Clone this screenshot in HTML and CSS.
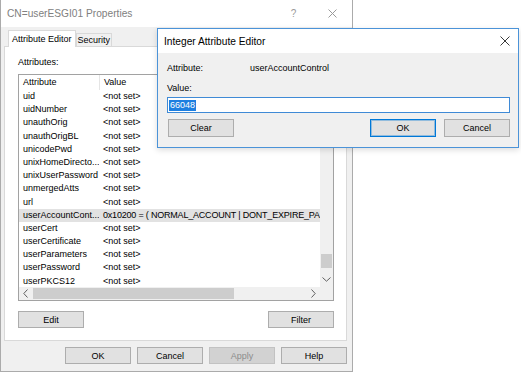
FILE: index.html
```html
<!DOCTYPE html>
<html lang="en">
<head>
    <meta charset="UTF-8">
    <meta name="viewport" content="width=device-width, initial-scale=1.0">
    <title>CN=userESGI01 Properties</title>

    <link rel="stylesheet" href="styles.css">

</head>
<body>

    <div class="desktop">

        <!-- properties window (inactive) -->
        <div class="window props">
            <div class="titlebar">
                <span class="title">CN=userESGI01 Properties</span>
                <span class="ctrl">?</span>
                <span class="ctrl">
                    <svg width="9" height="9" viewBox="0 0 9 9"><path d="M0.5 0.5 L8.5 8.5 M8.5 0.5 L0.5 8.5" stroke="#9a9a9a" stroke-width="1" fill="none"/></svg>
                </span>
            </div>

            <div class="props-body">
                <div class="tabs">
                    <div class="tab active">Attribute Editor</div>
                    <div class="tab">Security</div>
                </div>

                <div class="panel">
                    <div class="label">Attributes:</div>

                    <div class="listview">
                        <div class="lv-main">
                            <div class="lv-header">
                                <span class="col-name">Attribute</span>
                                <span class="col-value">Value</span>
                            </div>
                            <div class="lv-rows">
                                <div class="row"><span>uid</span><span>&lt;not set&gt;</span></div>
                                <div class="row"><span>uidNumber</span><span>&lt;not set&gt;</span></div>
                                <div class="row"><span>unauthOrig</span><span>&lt;not set&gt;</span></div>
                                <div class="row"><span>unauthOrigBL</span><span>&lt;not set&gt;</span></div>
                                <div class="row"><span>unicodePwd</span><span>&lt;not set&gt;</span></div>
                                <div class="row"><span>unixHomeDirecto...</span><span>&lt;not set&gt;</span></div>
                                <div class="row"><span>unixUserPassword</span><span>&lt;not set&gt;</span></div>
                                <div class="row"><span>unmergedAtts</span><span>&lt;not set&gt;</span></div>
                                <div class="row"><span>url</span><span>&lt;not set&gt;</span></div>
                                <div class="row selected"><span>userAccountCont...</span><span class="long">0x10200 = ( NORMAL_ACCOUNT | DONT_EXPIRE_PASSWORD )</span></div>
                                <div class="row"><span>userCert</span><span>&lt;not set&gt;</span></div>
                                <div class="row"><span>userCertificate</span><span>&lt;not set&gt;</span></div>
                                <div class="row"><span>userParameters</span><span>&lt;not set&gt;</span></div>
                                <div class="row"><span>userPassword</span><span>&lt;not set&gt;</span></div>
                                <div class="row"><span>userPKCS12</span><span>&lt;not set&gt;</span></div>
                            </div>
                            <div class="hscroll">
                                <span class="arrow">
                                    <svg width="5" height="9" viewBox="0 0 5 9"><polyline points="4.5,0.5 0.8,4.5 4.5,8.5" stroke="#606060" fill="none"/></svg>
                                </span>
                                <div class="htrack"><div class="hthumb"></div></div>
                                <span class="arrow">
                                    <svg width="5" height="9" viewBox="0 0 5 9"><polyline points="0.5,0.5 4.2,4.5 0.5,8.5" stroke="#606060" fill="none"/></svg>
                                </span>
                            </div>
                        </div>
                        <div class="vscroll">
                            <span class="arrow">
                                <svg width="9" height="5" viewBox="0 0 9 5"><polyline points="0.5,4.5 4.5,0.8 8.5,4.5" stroke="#606060" fill="none"/></svg>
                            </span>
                            <div class="vtrack"><div class="vthumb"></div></div>
                            <span class="arrow">
                                <svg width="9" height="5" viewBox="0 0 9 5"><polyline points="0.5,0.5 4.5,4.2 8.5,0.5" stroke="#606060" fill="none"/></svg>
                            </span>
                            <div class="corner"></div>
                        </div>
                    </div>

                    <div class="panel-buttons">
                        <button class="btn">Edit</button>
                        <button class="btn">Filter</button>
                    </div>
                </div>

                <div class="dialog-buttons">
                    <button class="btn">OK</button>
                    <button class="btn">Cancel</button>
                    <button class="btn disabled">Apply</button>
                    <button class="btn">Help</button>
                </div>
            </div>
        </div>

        <!-- integer editor (active, on top) -->
        <div class="window editor">
            <div class="ed-titlebar">
                <span class="title">Integer Attribute Editor</span>
                <svg width="10" height="10" viewBox="0 0 10 10"><path d="M0.5 0.5 L9.5 9.5 M9.5 0.5 L0.5 9.5" stroke="#222" stroke-width="0.9" fill="none"/></svg>
            </div>
            <div class="ed-body">
                <div class="field">
                    <span>Attribute:</span>
                    <span>userAccountControl</span>
                </div>
                <div class="value-label">Value:</div>
                <div class="textbox"><span class="sel-text">66048</span></div>
                <div class="ed-buttons">
                    <button class="btn clear">Clear</button>
                    <button class="btn default">OK</button>
                    <button class="btn">Cancel</button>
                </div>
            </div>
        </div>

    </div>

</body>
</html>
```

FILE: styles.css
```css
*{
    margin: 0;padding:0;
    box-sizing: border-box
}

body{
    font-family: "Liberation Sans", Arial, sans-serif;
    font-size: 9px;
    color: #000;
    background: #fff
}

.desktop{
    position: relative;
    width: 521px;
    height: 373px;
    overflow: hidden;
    background: #fff
}

.window{
    position: absolute;
    display: flex;
    flex-direction: column;
    background: #f0f0f0
}

/* ---- properties window ---- */

.props{
    left: 0; top: 0;
    width: 353px;
    height: 372px;
    border: 1px solid #ababab;
    border-top: none
}

.titlebar{
    height: 27px;
    background: #fff;
    display: flex;
    align-items: center
}

.titlebar .title{
    flex: 1;
    padding-left: 6px;
    color: #808080;
    font-size: 10.2px
}

.ctrl{
    width: 39px;
    display: flex;
    justify-content: center;
    color: #9a9a9a;
    font-size: 10px
}

.props-body{
    flex: 1;
    display: flex;
    flex-direction: column;
    padding: 3px 5px 7px 3px
}

.tabs{
    display: flex;
    align-items: flex-end;
    height: 16px;
    padding-left: 4px
}

.tab{
    height: 13px;
    line-height: 13px;
    padding: 0 1px;
    border: 1px solid #d9d9d9;
    border-bottom: none;
    background: #f0f0f0
}

.tab.active{
    height: 17px;
    line-height: 16px;
    padding: 0 3px;
    margin-bottom: -1px;
    background: #fff;
    position: relative;
    z-index: 1
}

.panel{
    height: 295px;
    background: #fff;
    border: 1px solid #d9d9d9;
    padding: 9px 12px 12px 13px;
    display: flex;
    flex-direction: column
}

.label{
    line-height: 12px
}

.listview{
    margin-top: 6px;
    height: 227px;
    border: 1px solid #a2a2a2;
    display: flex
}

.lv-main{
    flex: 1;
    min-width: 0;
    display: flex;
    flex-direction: column
}

.lv-header{
    height: 15px;
    line-height: 15px;
    display: grid;
    grid-template-columns: 81px 1fr
}

.lv-header span{
    padding-left: 4px
}

.lv-header .col-name{
    border-right: 1px solid #e5e5e5
}

.lv-rows{
    flex: 1;
    overflow: hidden
}

.row{
    height: 13.2px;
    line-height: 13.2px;
    display: grid;
    grid-template-columns: 80px 1fr;
    white-space: nowrap
}

.row span{
    padding-left: 4px;
    overflow: hidden
}

.row .long{
    letter-spacing: -0.2px
}

.row.selected{
    background: #e2e2e2
}

.arrow{
    width: 13px;
    height: 13px;
    display: flex;
    justify-content: center;
    align-items: center;
    flex-shrink: 0
}

.hscroll{
    height: 13px;
    display: flex;
    background: #f0f0f0
}

.htrack{
    flex: 1;
    display: flex;
    align-items: center
}

.hthumb{
    width: 201px;
    height: 11px;
    margin-left: 1px;
    background: #cdcdcd
}

.vscroll{
    width: 13px;
    display: flex;
    flex-direction: column;
    background: #f0f0f0
}

.vtrack{
    flex: 1;
    display: flex;
    flex-direction: column;
    justify-content: flex-end;
    align-items: center
}

.vthumb{
    width: 11px;
    height: 14px;
    margin-bottom: 5px;
    background: #cdcdcd
}

.corner{
    height: 14px
}

.panel-buttons{
    margin-top: 10px;
    display: flex;
    justify-content: space-between
}

.btn{
    width: 66px;
    height: 17px;
    font: inherit;
    color: #000;
    background: #e1e1e1;
    border: 1px solid #adadad
}

.btn.disabled{
    background: #d2d2d2;
    border-color: #c2c2c2;
    color: #8c8c8c
}

.dialog-buttons{
    margin-top: 6px;
    display: flex;
    justify-content: flex-end;
    gap: 6px
}

/* ---- integer editor ---- */

.editor{
    left: 157px; top: 28px;
    width: 362px;
    height: 120px;
    border: 1px solid #4b93d8;
    box-shadow: 0 2px 6px rgba(0,0,0,0.14)
}

.ed-titlebar{
    height: 24px;
    background: #fff;
    display: flex;
    align-items: center;
    padding: 0 8px 0 6px
}

.ed-titlebar .title{
    flex: 1;
    font-size: 10.2px
}

.ed-body{
    flex: 1;
    padding: 9px 8px 10px 9px
}

.field{
    display: grid;
    grid-template-columns: 83px 1fr;
    line-height: 12px
}

.value-label{
    margin-top: 8px;
    line-height: 12px
}

.textbox{
    margin-top: 3px;
    height: 16px;
    background: #fff;
    border: 1px solid #3f8ad6;
    padding-left: 1px;
    display: flex;
    align-items: center
}

.sel-text{
    background: #1e7fe0;
    color: #fff;
    line-height: 11px;
    padding: 0 1px
}

.ed-buttons{
    margin-top: 6px;
    display: flex;
    gap: 8px
}

.ed-buttons .btn{
    height: 18px
}

.btn.clear{
    margin-left: 1px;
    margin-right: auto
}

.btn.default{
    border-color: #0078d7;
    box-shadow: inset 0 0 0 1px rgba(0,120,215,0.35)
}
```
